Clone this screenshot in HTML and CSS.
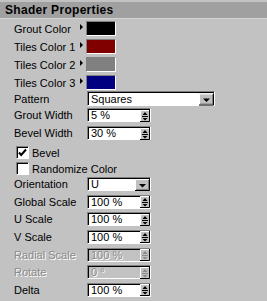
FILE: index.html
```html
<!DOCTYPE html>
<html>
<head>
<meta charset="utf-8">
<link rel="stylesheet" href="styles.css">
</head>
<body>
<svg class="defs" width="0" height="0">
  <defs>
    <symbol id="spin" viewBox="0 0 10 12">
      <rect width="10" height="12" fill="#c0c0c0"/>
      <path d="M0.5 11.5V0.5H9.5" stroke="#fff" fill="none"/>
      <path d="M0 11.5H9.5V0" stroke="#000" fill="none"/>
      <path d="M5 2L7.5 5H2.5Z" fill="currentColor"/>
      <path d="M2 6.5H8" stroke="currentColor"/>
      <path d="M2.5 8H7.5L5 10.5Z" fill="currentColor"/>
    </symbol>
    <symbol id="drop" viewBox="0 0 15 12">
      <rect width="15" height="12" fill="#c0c0c0"/>
      <path d="M0.5 11.5V0.5H14.5" stroke="#fff" fill="none"/>
      <path d="M0 11.5H14.5V0" stroke="#000" fill="none"/>
      <path d="M1 10.5H13.5V1" stroke="#808080" fill="none"/>
      <path d="M4 5H11L7.5 8.5Z" fill="#000"/>
    </symbol>
  </defs>
</svg>
<div class="panel">
  <div class="title">Shader Properties</div>

  <div class="colors">
    <div class="crow"><span class="clbl">Grout Color</span><span class="tri"></span><span class="swatch sw-black"></span></div>
    <div class="crow"><span class="clbl">Tiles Color 1</span><span class="tri"></span><span class="swatch sw-red"></span></div>
    <div class="crow"><span class="clbl">Tiles Color 2</span><span class="tri"></span><span class="swatch sw-grey"></span></div>
    <div class="crow"><span class="clbl">Tiles Color 3</span><span class="tri"></span><span class="swatch sw-blue"></span></div>
  </div>

  <div class="frow pattern">
    <span class="lbl">Pattern</span>
    <div class="field select wide"><span class="val">Squares</span><svg class="ddbtn"><use href="#drop"/></svg></div>
  </div>

  <div class="group g1">
    <div class="frow"><span class="lbl">Grout Width</span><div class="field"><span class="val">5 %</span><svg class="spin"><use href="#spin"/></svg></div></div>
    <div class="frow"><span class="lbl">Bevel Width</span><div class="field"><span class="val">30 %</span><svg class="spin"><use href="#spin"/></svg></div></div>
  </div>

  <div class="checks">
    <label class="chk"><span class="box"><svg width="11" height="11" viewBox="0 0 11 11"><path d="M2 5.5L4.2 8L9 2.5" stroke="#000" stroke-width="2" fill="none"/></svg></span>Bevel</label>
    <label class="chk"><span class="box"></span>Randomize Color</label>
  </div>

  <div class="group g2">
    <div class="frow"><span class="lbl">Orientation</span><div class="field select"><span class="val">U</span><svg class="ddbtn"><use href="#drop"/></svg></div></div>
    <div class="frow"><span class="lbl">Global Scale</span><div class="field"><span class="val">100 %</span><svg class="spin"><use href="#spin"/></svg></div></div>
    <div class="frow"><span class="lbl">U Scale</span><div class="field"><span class="val">100 %</span><svg class="spin"><use href="#spin"/></svg></div></div>
    <div class="frow"><span class="lbl">V Scale</span><div class="field"><span class="val">100 %</span><svg class="spin"><use href="#spin"/></svg></div></div>
    <div class="frow dis"><span class="lbl">Radial Scale</span><div class="field"><span class="val">100 %</span><svg class="spin"><use href="#spin"/></svg></div></div>
    <div class="frow dis"><span class="lbl">Rotate</span><div class="field"><span class="val">0 °</span><svg class="spin"><use href="#spin"/></svg></div></div>
    <div class="frow"><span class="lbl">Delta</span><div class="field"><span class="val">100 %</span><svg class="spin"><use href="#spin"/></svg></div></div>
  </div>
</div>
</body>
</html>
```
FILE: styles.css
```css
html, body {
  margin: 0;
  padding: 0;
  background: #c2c2c2;
}
.defs {
  position: absolute;
  width: 0;
  height: 0;
}
.panel {
  width: 267px;
  height: 301px;
  box-sizing: border-box;
  padding-top: 2px;
  background: #c2c2c2;
  font-family: "Liberation Sans", Arial, sans-serif;
  font-size: 11px;
  color: #000;
  display: flex;
  flex-direction: column;
  overflow: hidden;
}
.title {
  height: 16px;
  line-height: 16px;
  background: #a0a0a0;
  border-bottom: 1px solid #d2d2d2;
  padding-left: 5px;
  font-weight: bold;
  font-size: 12px;
  letter-spacing: 0.3px;
}
.colors {
  display: flex;
  flex-direction: column;
  gap: 3px;
  padding-top: 2px;
}
.crow {
  display: flex;
  align-items: center;
  height: 15px;
  padding-left: 14px;
}
.clbl {
  width: 66px;
  white-space: nowrap;
}
.tri {
  align-self: flex-start;
  margin-top: 3px;
  margin-right: 3px;
  width: 0;
  height: 0;
  border-left: 3px solid #000;
  border-top: 3px solid transparent;
  border-bottom: 3px solid transparent;
}
.swatch {
  width: 30px;
  height: 15px;
  box-sizing: border-box;
  border: 1px solid;
  border-color: #808080 #fff #fff #808080;
}
.sw-black { background: #000; }
.sw-red { background: #800000; }
.sw-grey { background: #808080; }
.sw-blue { background: #000080; }

.frow {
  display: flex;
  align-items: center;
  height: 14px;
  padding-left: 14px;
}
.lbl {
  width: 73px;
  white-space: nowrap;
}
.pattern {
  margin-top: 1px;
  height: 15px;
}
.field {
  width: 64px;
  height: 14px;
  box-sizing: border-box;
  background: #fff;
  border: 1px solid;
  border-color: #808080 #fff #fff #808080;
  box-shadow: inset 1px 1px #000;
  display: flex;
  align-items: center;
  padding-left: 3px;
  color: #000;
}
.pattern .field {
  height: 15px;
}
.wide {
  width: 128px;
}
.val {
  flex: 1;
  white-space: nowrap;
  line-height: 12px;
}
.spin {
  width: 10px;
  height: 12px;
  margin-top: 1px;
  color: #000;
}
.ddbtn {
  width: 15px;
  height: 12px;
  margin-top: 1px;
}
.pattern .ddbtn {
  height: 13px;
}
.group {
  display: flex;
  flex-direction: column;
}
.g1 {
  margin-top: 2px;
  gap: 4px;
}
.g2 {
  margin-top: 2px;
  gap: 3.67px;
}
.checks {
  display: flex;
  flex-direction: column;
  gap: 3px;
  margin-top: 6px;
}
.chk {
  display: flex;
  align-items: center;
  height: 13px;
  padding-left: 16px;
  gap: 3px;
}
.box {
  width: 13px;
  height: 13px;
  box-sizing: border-box;
  background: #fff;
  border: 1px solid;
  border-color: #808080 #fff #fff #808080;
  box-shadow: inset 1px 1px #000;
  display: flex;
  align-items: center;
  justify-content: center;
}
.dis .lbl {
  color: #8a8a8a;
  text-shadow: 1px 1px #fff;
}
.dis .field {
  background: #c2c2c2;
  color: #8a8a8a;
  text-shadow: 1px 1px #fff;
}
.dis .spin {
  color: #8a8a8a;
}
```
